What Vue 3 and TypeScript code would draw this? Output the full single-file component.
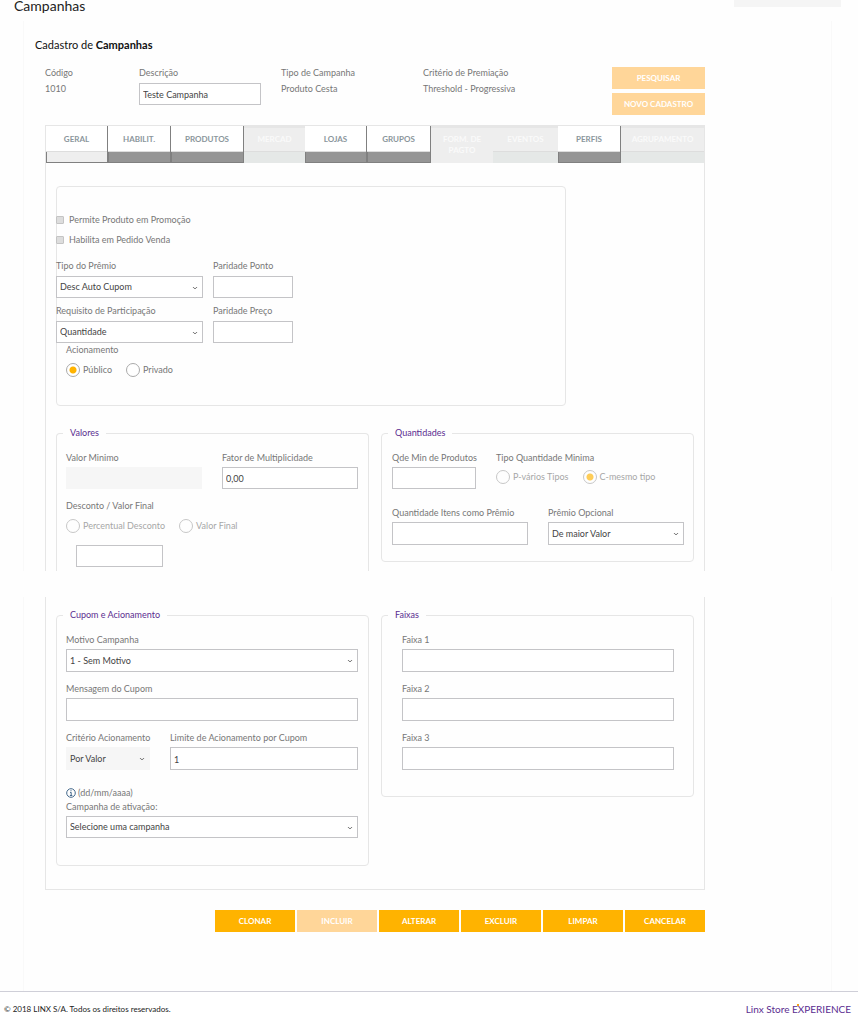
<script setup lang="ts">
import { ref } from 'vue'

interface Tab {
  label: string
  span: number
  state: 'on' | 'idle' | 'off' | 'off full'
}

const tabs: Tab[] = [
  { label: 'GERAL', span: 62, state: 'on' },
  { label: 'HABILIT.', span: 63, state: 'idle' },
  { label: 'PRODUTOS', span: 73, state: 'idle' },
  { label: 'MERCAD', span: 61, state: 'off' },
  { label: 'LOJAS', span: 62, state: 'idle' },
  { label: 'GRUPOS', span: 64, state: 'idle' },
  { label: 'FORM. DE PAGTO', span: 62, state: 'off full' },
  { label: 'EVENTOS', span: 65, state: 'off' },
  { label: 'PERFIS', span: 63, state: 'idle' },
  { label: 'AGRUPAMENTO', span: 83, state: 'off' },
]
const tabColumns = tabs.map((t) => `minmax(0, ${t.span}fr)`).join(' ')

const actions = [
  { label: 'CLONAR', disabled: false },
  { label: 'INCLUIR', disabled: true },
  { label: 'ALTERAR', disabled: false },
  { label: 'EXCLUIR', disabled: false },
  { label: 'LIMPAR', disabled: false },
  { label: 'CANCELAR', disabled: false },
]

const description = ref('Teste Campanha')
const trigger = ref('publico')
const quantityType = ref('mesmo')
const factor = ref('0,00')
const limit = ref('1')
const tiers = ref(['', '', ''])
</script>

<template>
  <div class="page">
    <header class="top">
      <h1>Campanhas</h1>
      <div class="user-box"></div>
    </header>

    <main>
      <section class="sheet">
        <h2>Cadastro de <b>Campanhas</b></h2>
        <div class="summary">
          <div class="pair"><span>Código</span><span>1010</span></div>
          <div class="pair described">
            <label for="desc">Descrição</label>
            <input id="desc" v-model="description" type="text" />
          </div>
          <div class="pair"><span>Tipo de Campanha</span><span>Produto Cesta</span></div>
          <div class="pair"><span>Critério de Premiação</span><span>Threshold - Progressiva</span></div>
          <div class="side-actions">
            <button type="button" class="btn" disabled>PESQUISAR</button>
            <button type="button" class="btn" disabled>NOVO CADASTRO</button>
          </div>
        </div>

        <div class="panel upper">
          <nav class="tabs" :style="{ gridTemplateColumns: tabColumns }">
            <button
              v-for="t in tabs"
              :key="t.label"
              type="button"
              class="tab"
              :class="t.state"
              :disabled="t.state.startsWith('off')"
            >
              <span class="tab-label">{{ t.label }}</span>
              <span class="strip"></span>
            </button>
          </nav>

          <div class="general">
            <label class="check"><input type="checkbox" />Permite Produto em Promoção</label>
            <label class="check"><input type="checkbox" />Habilita em Pedido Venda</label>
            <div class="row award first">
              <div class="field">
                <label for="award">Tipo do Prêmio</label>
                <span class="select">
                  <select id="award"><option>Desc Auto Cupom</option></select>
                  <svg viewBox="0 0 6 4"><path d="M1 1 Q2 2.6 3 2.6 Q4 2.6 5 1" /></svg>
                </span>
              </div>
              <div class="field">
                <label for="point">Paridade Ponto</label>
                <input id="point" type="text" />
              </div>
            </div>
            <div class="row award">
              <div class="field">
                <label for="req">Requisito de Participação</label>
                <span class="select">
                  <select id="req"><option>Quantidade</option></select>
                  <svg viewBox="0 0 6 4"><path d="M1 1 Q2 2.6 3 2.6 Q4 2.6 5 1" /></svg>
                </span>
              </div>
              <div class="field">
                <label for="price">Paridade Preço</label>
                <input id="price" type="text" />
              </div>
            </div>
            <div class="trigger">
              <span class="caption">Acionamento</span>
              <div class="radios">
                <label><input v-model="trigger" type="radio" name="trigger" value="publico" />Público</label>
                <label><input v-model="trigger" type="radio" name="trigger" value="privado" />Privado</label>
              </div>
            </div>
          </div>

          <div class="halves">
            <fieldset class="open">
              <legend>Valores</legend>
              <div class="row two">
                <div class="field">
                  <label for="min">Valor Minimo</label>
                  <input id="min" type="text" disabled />
                </div>
                <div class="field">
                  <label for="factor">Fator de Multiplicidade</label>
                  <input id="factor" v-model="factor" type="text" />
                </div>
              </div>
              <div class="discount">
                <span class="caption">Desconto / Valor Final</span>
                <div class="radios faded">
                  <label><input type="radio" name="discount" disabled />Percentual Desconto</label>
                  <label><input type="radio" name="discount" disabled />Valor Final</label>
                </div>
                <input class="amount" type="text" aria-label="Desconto / Valor Final" />
              </div>
            </fieldset>

            <fieldset class="quantities">
              <legend>Quantidades</legend>
              <div class="row narrow-wide">
                <div class="field">
                  <label for="qmin">Qde Min de Produtos</label>
                  <input id="qmin" type="text" />
                </div>
                <div class="field">
                  <span class="caption">Tipo Quantidade Minima</span>
                  <div class="radios faded">
                    <label><input v-model="quantityType" type="radio" name="qt" value="varios" disabled />P-vários Tipos</label>
                    <label><input v-model="quantityType" type="radio" name="qt" value="mesmo" disabled />C-mesmo tipo</label>
                  </div>
                </div>
              </div>
              <div class="row two second">
                <div class="field">
                  <label for="qitems">Quantidade Itens como Prêmio</label>
                  <input id="qitems" type="text" />
                </div>
                <div class="field">
                  <label for="optional">Prêmio Opcional</label>
                  <span class="select">
                    <select id="optional"><option>De maior Valor</option></select>
                    <svg viewBox="0 0 6 4"><path d="M1 1 Q2 2.6 3 2.6 Q4 2.6 5 1" /></svg>
                  </span>
                </div>
              </div>
            </fieldset>
          </div>
        </div>
      </section>

      <section class="sheet lower-sheet">
        <div class="panel lower">
          <div class="halves">
            <fieldset class="coupon">
              <legend>Cupom e Acionamento</legend>
              <div class="field">
                <label for="reason">Motivo Campanha</label>
                <span class="select">
                  <select id="reason"><option>1 - Sem Motivo</option></select>
                  <svg viewBox="0 0 6 4"><path d="M1 1 Q2 2.6 3 2.6 Q4 2.6 5 1" /></svg>
                </span>
              </div>
              <div class="field">
                <label for="message">Mensagem do Cupom</label>
                <input id="message" type="text" />
              </div>
              <div class="row narrow-wide">
                <div class="field">
                  <label for="criterion">Critério Acionamento</label>
                  <span class="select">
                    <select id="criterion" disabled><option>Por Valor</option></select>
                    <svg viewBox="0 0 6 4"><path d="M1 1 Q2 2.6 3 2.6 Q4 2.6 5 1" /></svg>
                  </span>
                </div>
                <div class="field">
                  <label for="limit">Limite de Acionamento por Cupom</label>
                  <input id="limit" v-model="limit" type="text" />
                </div>
              </div>
              <div class="activation">
                <p class="hint">
                  <svg viewBox="0 0 10 10">
                    <circle cx="5" cy="5" r="4.3" />
                    <path d="M4 4.4h1.2v3M3.9 7.5h2.4M5 2.2v1" />
                  </svg>
                  (dd/mm/aaaa)
                </p>
                <label for="activation">Campanha de ativação:</label>
                <span class="select">
                  <select id="activation"><option>Selecione uma campanha</option></select>
                  <svg viewBox="0 0 6 4"><path d="M1 1 Q2 2.6 3 2.6 Q4 2.6 5 1" /></svg>
                </span>
              </div>
            </fieldset>

            <fieldset class="tiers">
              <legend>Faixas</legend>
              <div v-for="(_, i) in tiers" :key="i" class="field">
                <label :for="`tier-${i}`">Faixa {{ i + 1 }}</label>
                <input :id="`tier-${i}`" v-model="tiers[i]" type="text" />
              </div>
            </fieldset>
          </div>
        </div>
        <div class="actions">
          <button v-for="a in actions" :key="a.label" type="button" class="btn" :disabled="a.disabled">
            {{ a.label }}
          </button>
        </div>
      </section>
    </main>

    <footer>
      <span>© 2018 LINX S/A. Todos os direitos reservados.</span>
      <span class="brand">Linx Store <span class="mark">EXPERIENCE</span></span>
    </footer>
  </div>
</template>

<style>
body {
  margin: 0;
  background: #fefefe;
}
</style>

<style scoped>
.page,
.page * {
  box-sizing: border-box;
}
.page {
  --field: 22px;
  display: flex;
  flex-direction: column;
  min-height: 100vh;
  color: #777;
  font-family: Lato, "Liberation Sans", sans-serif;
  font-size: 9px;
  line-height: 16px;
}
.top {
  display: flex;
  justify-content: space-between;
  height: 21px;
  padding: 0 17px 0 14px;
}
h1 {
  margin: 0;
  color: #222;
  font-size: 14px;
  font-weight: 400;
  line-height: 12px;
}
.user-box {
  width: 107px;
  height: 7px;
  background: #f5f5f5;
}
main {
  flex: 1;
  display: flex;
  flex-direction: column;
}
.sheet {
  margin: 0 26px 0 23px;
  padding: 14px 126px 0 21px;
  border: solid #f9f9f9;
  border-width: 0 1px;
}
.lower-sheet {
  --field: 23px;
  flex: 1;
  margin-top: 26px;
  padding-top: 0;
  padding-bottom: 59px;
}
h2 {
  margin: 0 0 0 -10px;
  color: #111;
  font-size: 11px;
  font-weight: 400;
  line-height: 20px;
}
h2 b {
  font-weight: 700;
}
.summary {
  display: grid;
  grid-template-columns: 94fr 142fr 142fr 189fr 93fr;
  margin: 10px 0;
}
.pair {
  display: flex;
  flex-direction: column;
}
.described {
  gap: 2px;
  padding-right: 20px;
}
.described input {
  height: 23px;
}
.side-actions {
  display: flex;
  flex-direction: column;
  gap: 4px;
  padding-top: 2px;
}
.btn {
  height: 22px;
  padding: 0;
  border: 0;
  background: #ffb300;
  color: #fff;
  font: 700 8px/22px Lato, "Liberation Sans", sans-serif;
  text-align: center;
}
.btn:disabled {
  background: #ffd699;
}
.panel {
  border: 1px solid #e6e6e6;
}
.upper {
  border-bottom: 0;
}
.lower {
  border-top: 0;
  padding: 10px 10px 23px;
}
.tabs {
  display: grid;
}
.tab {
  display: flex;
  flex-direction: column;
  height: 37px;
  padding: 0;
  border: 0;
  border-right: 1px solid #808080;
  background: #fff;
  color: #8b969c;
  font: 700 8px/11px Lato, "Liberation Sans", sans-serif;
}
.tab-label {
  width: 100%;
  height: 26px;
  padding: 8px 0 0;
  border-bottom: 1px solid #ddd;
  text-align: center;
}
.strip {
  width: 100%;
  flex: 1;
  border: solid #808080;
  border-width: 0 0 1px 1px;
  background: #959595;
}
.on .strip {
  background: #eee;
}
.off {
  border-right: 0;
  background: #eee;
  color: #fafafa;
}
.off .tab-label {
  padding: 6px 0 0;
  border-top: 2px solid #e6e6e6;
}
.off .strip {
  border: 0;
  background: #e5e8e7;
}
.off.full .tab-label {
  height: 37px;
  padding: 6px 10px 0;
  border-bottom: 0;
}
.off.full .strip {
  display: none;
}
.general {
  width: calc((100% - 20px) * 0.8);
  height: 220px;
  margin: 23px 0 19px 10px;
  padding-top: 23px;
  border: 1px solid #e6e6e6;
  border-radius: 4px;
}
.check {
  display: flex;
  align-items: center;
  gap: 5px;
  height: 20px;
  margin-left: -1px;
}
.check input {
  appearance: none;
  width: 8px;
  height: 8px;
  margin: 0;
  border: 1px solid #c4c4c4;
  border-radius: 1px;
  background: #ddd;
}
.row {
  display: grid;
  gap: 20px;
}
.award {
  grid-template-columns: 147px 80px;
  gap: 10px;
  margin: 5px 0 0 -1px;
}
.first {
  margin-top: 8px;
}
.two {
  grid-template-columns: repeat(2, minmax(0, 1fr));
}
.narrow-wide {
  grid-template-columns: minmax(0, 84fr) minmax(0, 188fr);
}
.field {
  display: flex;
  flex-direction: column;
  gap: 1px;
  min-width: 0;
}
.general .field {
  gap: 2px;
}
label,
.caption,
.pair,
.radios {
  white-space: nowrap;
}
input[type='text'],
select {
  width: 100%;
  height: var(--field);
  padding: 1px 3px 0;
  border: 1px solid #c4c4c7;
  border-radius: 0;
  outline: 0;
  background: #fff;
  color: #444;
  font: inherit;
}
input[type='text']:disabled,
select:disabled {
  border-color: #f6f6f6;
  background: #f6f6f6;
  opacity: 1;
}
select {
  appearance: none;
  display: block;
  padding-top: 0;
}
.select {
  position: relative;
  display: block;
}
.select svg {
  position: absolute;
  right: 5px;
  top: 10px;
  width: 6px;
  height: 4px;
  fill: none;
  stroke: #777;
  pointer-events: none;
}
.trigger {
  padding: 0 9px;
}
.trigger .caption {
  line-height: 14px;
}
.trigger .radios {
  margin-top: 5px;
}
.radios {
  display: flex;
  gap: 14px;
}
.radios label {
  display: flex;
  align-items: center;
  gap: 3px;
  height: 16px;
}
.radios input {
  appearance: none;
  width: 14px;
  height: 14px;
  margin: 0;
  border: 1px solid #aaa;
  border-radius: 50%;
  background: #fff;
}
.radios input:checked {
  background: radial-gradient(circle, #ffb300 3px, #fff 4px);
}
.faded {
  opacity: 0.65;
}
.halves {
  display: grid;
  grid-template-columns: repeat(2, minmax(0, 1fr));
  align-items: start;
  gap: 12px;
}
.upper .halves {
  padding: 0 10px;
}
fieldset {
  min-width: 0;
  margin: 0;
  padding: 9px 10px 0 9px;
  border: 1px solid #e6e6e6;
  border-radius: 4px;
}
legend {
  margin-left: -3px;
  padding: 0 7px;
  color: #5b2d90;
}
.open {
  border-bottom: 0;
  border-radius: 4px 4px 0 0;
  padding-bottom: 4px;
}
.discount {
  padding-top: 9px;
}
.caption {
  display: block;
}
.discount .radios {
  margin-top: 4px;
}
input.amount {
  display: block;
  width: 87px;
  margin: 11px 0 0 10px;
}
.quantities {
  padding: 9px 9px 16px 10px;
}
.quantities legend {
  margin-left: -4px;
}
.quantities .radios {
  margin-top: 2px;
}
.second {
  --field: 23px;
  margin-top: 16px;
}
.coupon,
.tiers {
  display: flex;
  flex-direction: column;
  gap: 9px;
}
.coupon {
  padding-bottom: 27px;
}
.tiers {
  padding: 9px 19px 26px 20px;
}
.tiers legend {
  margin-left: -14px;
}
.activation {
  --field: 22px;
  display: flex;
  flex-direction: column;
  padding-top: 6px;
}
.activation label {
  margin-bottom: 3px;
  line-height: 12px;
}
.hint {
  display: flex;
  align-items: center;
  gap: 2px;
  margin: 0;
}
.hint svg {
  width: 10px;
  height: 10px;
  fill: none;
  stroke: #44698c;
}
.actions {
  display: flex;
  justify-content: flex-end;
  gap: 2px;
  padding-top: 20px;
}
.actions .btn {
  width: 80px;
}
footer {
  display: flex;
  align-items: center;
  justify-content: space-between;
  height: 31px;
  padding: 4px 7px 0 4px;
  border-top: 1px solid #cfcfd8;
  background: #fff;
  color: #222;
  font-size: 8px;
}
.brand {
  color: #5b2d90;
  font-size: 10px;
}
.mark {
  position: relative;
}
.mark::after {
  content: '';
  position: absolute;
  top: 1px;
  left: 5px;
  width: 2px;
  height: 2px;
  background: #f5a11c;
}
</style>
